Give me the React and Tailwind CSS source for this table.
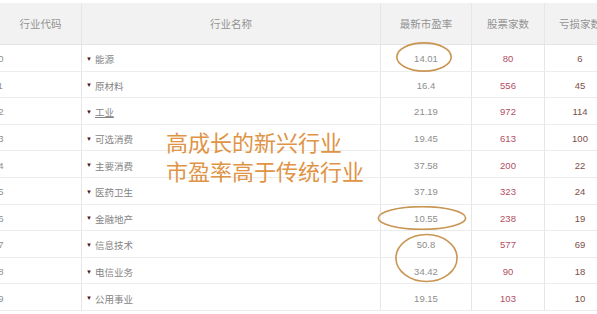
import React from "react";

const rows = [
  { code: "10", name: "能源", pe: "14.01", stocks: "80", loss: "6" },
  { code: "11", name: "原材料", pe: "16.4", stocks: "556", loss: "45" },
  { code: "12", name: "工业", pe: "21.19", stocks: "972", loss: "114", link: true },
  { code: "13", name: "可选消费", pe: "19.45", stocks: "613", loss: "100" },
  { code: "14", name: "主要消费", pe: "37.58", stocks: "200", loss: "22" },
  { code: "15", name: "医药卫生", pe: "37.19", stocks: "323", loss: "24" },
  { code: "16", name: "金融地产", pe: "10.55", stocks: "238", loss: "19" },
  { code: "17", name: "信息技术", pe: "50.8", stocks: "577", loss: "69" },
  { code: "18", name: "电信业务", pe: "34.42", stocks: "90", loss: "18" },
  { code: "19", name: "公用事业", pe: "19.15", stocks: "103", loss: "10" },
];

const cjk = { fontFamily: '"Noto Sans CJK SC", "Noto Sans", sans-serif' };

const Ellipse = ({ className }) => (
  <svg className={`absolute ${className}`} viewBox="0 0 100 50" preserveAspectRatio="none">
    <ellipse
      cx="50"
      cy="25"
      rx="48.5"
      ry="23.5"
      fill="none"
      stroke="#c99553"
      strokeWidth="1.6"
      vectorEffect="non-scaling-stroke"
    />
  </svg>
);

const App = () => {
  return (
    <div
      className="relative w-[597px] h-[314px] overflow-hidden bg-white"
      style={{ fontFamily: '"Liberation Sans", "Noto Sans CJK SC", sans-serif' }}
    >
      <div className="pt-[3px] w-[615px]">
        {/* header */}
        <div
          className="flex h-[42px] bg-[#f2f2f2] border-b border-[#e4e4e4] text-[10.5px] text-[#939393]"
          style={cjk}
        >
          <div className="w-[82px] flex items-center justify-center border-r border-[#e6e6e6]">行业代码</div>
          <div className="w-[299px] flex items-center justify-center border-r border-[#e6e6e6]">行业名称</div>
          <div className="w-[91px] flex items-center justify-center border-r border-[#e6e6e6]">最新市盈率</div>
          <div className="w-[73px] flex items-center justify-center border-r border-[#e6e6e6]">股票家数</div>
          <div className="w-[70px] flex items-center justify-center">亏损家数</div>
        </div>

        {/* rows */}
        {rows.map((r) => (
          <div key={r.code} className="flex h-[26.6px] border-b border-[#ececec] text-[9.5px]">
            <div className="w-[82px] flex items-center pt-[3px] border-r border-[#e6e6e6] text-[#8e8e8e]">
              <span className="-ml-[7px]">{r.code}</span>
            </div>
            <div className="w-[299px] flex items-center gap-[3px] pl-[4px] pt-[3px] border-r border-[#e6e6e6]">
              <span className="text-[6px] text-[#4a1212]">▼</span>
              <span className={`text-[#848484] ${r.link ? "underline" : ""}`} style={cjk}>
                {r.name}
              </span>
            </div>
            <div className="w-[91px] flex items-center justify-center pt-[3px] border-r border-[#e6e6e6] text-[#8e8e8e]">
              {r.pe}
            </div>
            <div className="w-[73px] flex items-center justify-center pt-[3px] border-r border-[#e6e6e6] text-[#b24e63]">
              {r.stocks}
            </div>
            <div className="w-[70px] flex items-center justify-center pt-[3px] text-[#7d5048]">
              {r.loss}
            </div>
          </div>
        ))}
      </div>

      {/* annotation */}
      <div
        className="absolute left-[166px] top-[127px] text-[22px] leading-[29px] text-[#df9446]"
        style={cjk}
      >
        <div>高成长的新兴行业</div>
        <div>市盈率高于传统行业</div>
      </div>

      <Ellipse className="left-[396px] top-[42px] w-[56px] h-[30px]" />
      <Ellipse className="left-[377px] top-[206px] w-[90px] h-[24px]" />
      <Ellipse className="left-[395px] top-[233px] w-[63px] h-[50px]" />
    </div>
  );
};

export default App;
